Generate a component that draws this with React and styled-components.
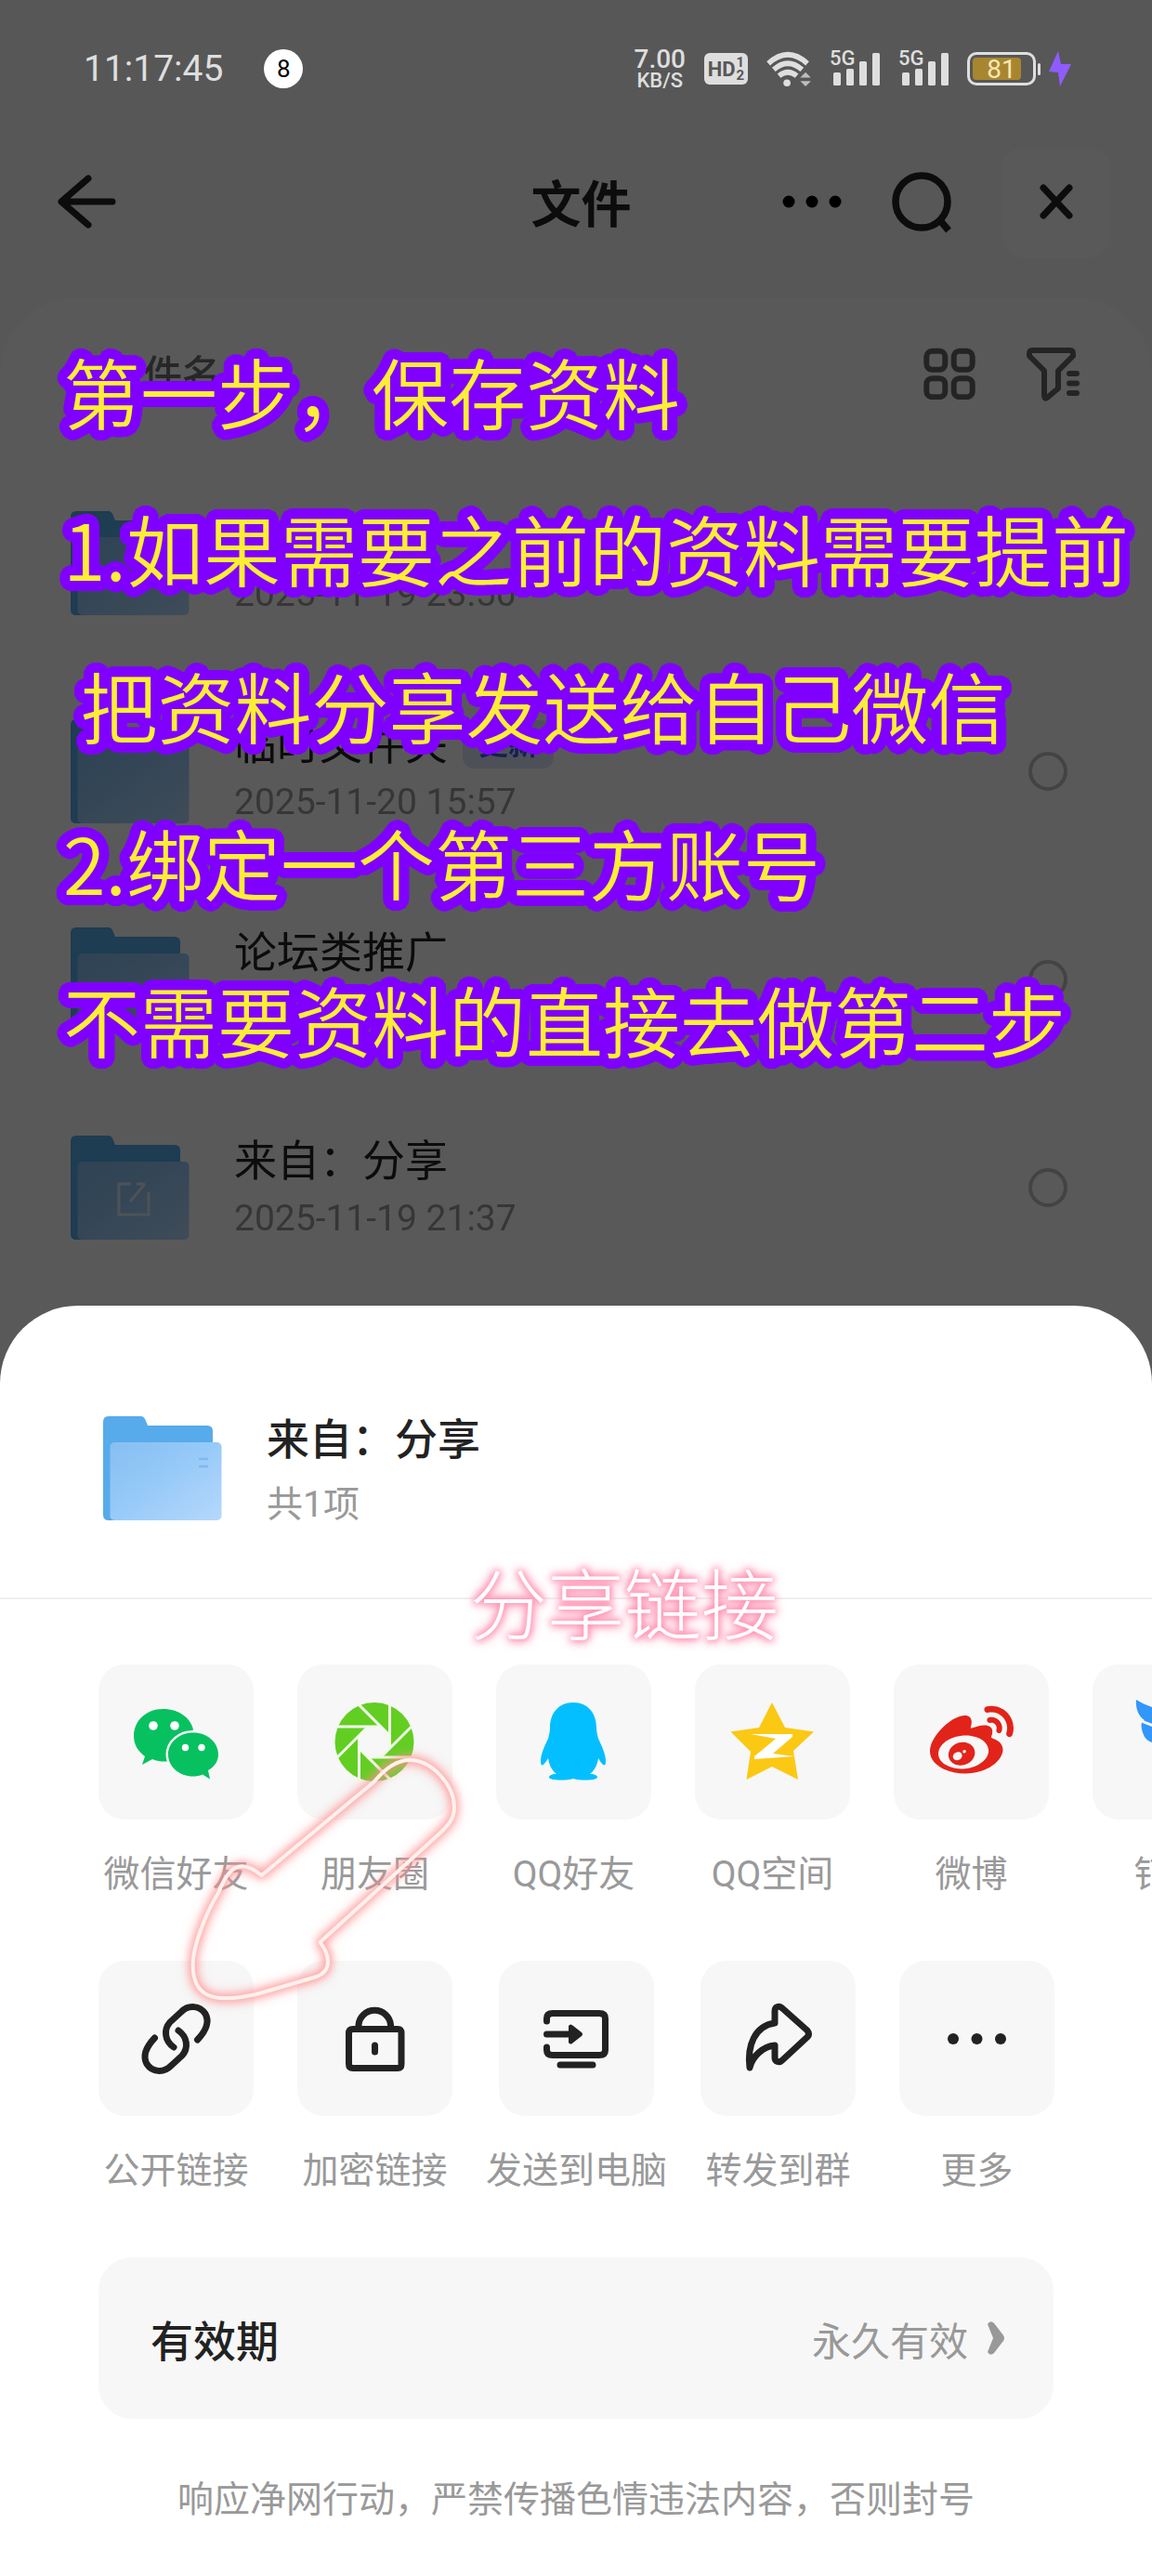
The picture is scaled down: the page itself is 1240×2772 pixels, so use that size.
import React from "react";
import styled, { createGlobalStyle, css } from "styled-components";
import { FaWeibo } from "react-icons/fa";

const files = [
  { id: 1, name: "", date: "2025-11-19 23:50" },
  { id: 2, name: "临时文件夹", date: "2025-11-20 15:57", tag: "更新" },
  { id: 3, name: "论坛类推广", date: "2025-11-18 20:16" },
  { id: 4, name: "来自：分享", date: "2025-11-19 21:37", shared: true },
];

const notes = [
  "第一步，保存资料",
  "1.如果需要之前的资料需要提前",
  " 把资料分享发送给自己微信",
  "2.绑定一个第三方账号",
  "不需要资料的直接去做第二步",
];

const apps = [
  { label: "微信好友", icon: <WechatIcon /> },
  { label: "朋友圈", icon: <MomentsIcon /> },
  { label: "QQ好友", icon: <QQIcon /> },
  { label: "QQ空间", icon: <QzoneIcon /> },
  { label: "微博", icon: <FaWeibo size={90} color="#e2231a" /> },
  { label: "钉钉", icon: <DingtalkIcon /> },
];

const actions = [
  { label: "公开链接", icon: <LinkIcon /> },
  { label: "加密链接", icon: <LockIcon /> },
  { label: "发送到电脑", icon: <ComputerIcon /> },
  { label: "转发到群", icon: <ForwardIcon /> },
  { label: "更多", icon: <MoreIcon /> },
];

// solid ring of shadows, reads as a thick round outline
const outline = (radius, color) =>
  Array.from({ length: 32 }, (_, i) => {
    const a = (i / 32) * Math.PI * 2;
    const x = (Math.cos(a) * radius).toFixed(1);
    const y = (Math.sin(a) * radius).toFixed(1);
    return `${x}px ${y}px 0 ${color}`;
  }).join(", ");

function App() {
  return (
    <Page>
      <GlobalStyle />
      <StatusBar />
      <Dimmed>
        <Header>
          <IconButton aria-label="返回">
            <svg width="72" height="72" viewBox="0 0 72 72">
              <Line d="M40 10 L11 35 L40 60 M11 35 H66" />
            </svg>
          </IconButton>
          <Title>文件</Title>
          <HeaderActions>
            <IconButton aria-label="更多">
              <svg width="64" height="64" viewBox="0 0 64 64">
                <circle cx="7" cy="31" r="6.5" />
                <circle cx="32" cy="31" r="6.5" />
                <circle cx="57" cy="31" r="6.5" />
              </svg>
            </IconButton>
            <IconButton aria-label="搜索">
              <svg width="72" height="72" viewBox="0 0 72 72">
                <circle cx="36" cy="35" r="28" fill="none" stroke="#222" strokeWidth="7.5" />
                <path d="M55 54 L65 66" stroke="#222" strokeWidth="7.5" />
              </svg>
            </IconButton>
            <CloseButton aria-label="关闭">
              <svg width="44" height="44" viewBox="0 0 44 44">
                <Line d="M8 6 L36 36 M36 6 L8 36" />
              </svg>
            </CloseButton>
          </HeaderActions>
        </Header>
        <Panel>
          <Toolbar>
            <SortLabel>文件名</SortLabel>
            <ToolbarActions>
              <IconButton aria-label="网格">
                <svg width="56" height="56" viewBox="0 0 56 56" fill="none" stroke="#676767" strokeWidth="6">
                  <rect x="3.3" y="3.8" width="20" height="20" rx="6" />
                  <rect x="32.7" y="3.8" width="20" height="20" rx="6" />
                  <rect x="3.3" y="33.2" width="20" height="20" rx="6" />
                  <rect x="32.7" y="33.2" width="20" height="20" rx="6" />
                </svg>
              </IconButton>
              <IconButton aria-label="筛选">
                <svg width="60" height="60" viewBox="0 0 60 60">
                  <Line
                    $color="#676767"
                    $width={6}
                    d="M7 5 H48 Q51 5 51 9 V11 L35 27 V46 L23 56 Q20 58 20 53 V27 L4 11 V9 Q4 5 7 5 Z"
                  />
                  <Line $color="#676767" $width={6} d="M47 30 H55 M47 40.5 H55 M47 51 H55" />
                </svg>
              </IconButton>
            </ToolbarActions>
          </Toolbar>
          <FileList>
            {files.map((file) => (
              <FileRow key={file.id}>
                <Folder shared={file.shared} id={`file-${file.id}`} />
                <FileText>
                  <FileName>
                    <span>{file.name}</span>
                    {file.tag && <Tag>{file.tag}</Tag>}
                  </FileName>
                  <FileDate>{file.date}</FileDate>
                </FileText>
                <Pick type="checkbox" aria-label={file.name || file.date} />
              </FileRow>
            ))}
          </FileList>
        </Panel>
      </Dimmed>

      <Notes>
        {notes.map((note) => (
          <p key={note}>{note}</p>
        ))}
      </Notes>

      <Sheet>
        <SheetHeader>
          <Folder lines id="sheet" />
          <SheetText>
            <SheetTitle>来自：分享</SheetTitle>
            <SheetCount>共1项</SheetCount>
          </SheetText>
        </SheetHeader>
        <ShareRow>
          {apps.map((item) => (
            <ShareItem key={item.label}>
              <Tile>{item.icon}</Tile>
              {item.label}
            </ShareItem>
          ))}
        </ShareRow>
        <ShareRow>
          {actions.map((item) => (
            <ShareItem key={item.label}>
              <Tile>{item.icon}</Tile>
              {item.label}
            </ShareItem>
          ))}
        </ShareRow>
        <Validity>
          有效期
          <ValidityValue>
            永久有效
            <svg width="20" height="36" viewBox="0 0 20 36">
              <path d="M1 3 Q4 -2 8 2 L18 15 Q20 18 18 21 L8 34 Q4 38 1 33 L7 18 Z" fill="#999" />
            </svg>
          </ValidityValue>
        </Validity>
        <Footer>响应净网行动，严禁传播色情违法内容，否则封号</Footer>
        <GlowText>分享链接</GlowText>
        <GlowArrow viewBox="0 0 320 300" aria-hidden="true">
          <path d="M91.6 147 L213 46 Q232 23 251 23 C275 23 299 50 299 74 C299 86 292 94 282 103 L154.5 219 Q163 230 163 240 Q163 251 151 256 L86 275 C36 286 17.6 276 17.6 243 C17.6 225 30 190 45 166 C56 138 68 128 91.6 147 Z" />
        </GlowArrow>
      </Sheet>
    </Page>
  );
}

export default App;

function StatusBar() {
  return (
    <StatusRow>
      <Clock>11:17:45</Clock>
      <Badge>8</Badge>
      <StatusIcons>
        <Speed>
          <b>7.00</b>
          <span>KB/S</span>
        </Speed>
        <HdBadge>
          HD
          <HdNumbers>
            <i>1</i>
            <i>2</i>
          </HdNumbers>
        </HdBadge>
        <svg width="48" height="40" viewBox="1 0 50 42">
          <g fill="none" stroke="#dedede" strokeWidth="6">
            <path d="M3 15 Q25 -5 47 15" />
            <path d="M9 22 Q25 8 41 22" />
            <path d="M15 29 Q25 21 35 29" />
          </g>
          <circle cx="24" cy="37" r="4" fill="#dedede" />
          <path d="M39 31 L45 25 L51 31 Z M39 35 L45 41 L51 35 Z" fill="#bdbdbd" />
        </svg>
        <Signal />
        <Signal />
        <Power>
          <Battery>
            <Charge style={{ width: "76%" }} />
            <span>81</span>
          </Battery>
          <BatteryTip />
          <svg width="26" height="40" viewBox="0 0 26 40">
            <path d="M11 1 L1 23 L11 24 L13 39 L25 15 L14 15 Z" fill="#8f5cff" />
          </svg>
        </Power>
      </StatusIcons>
    </StatusRow>
  );
}

function Signal() {
  return (
    <SignalBox>
      <span>5G</span>
      <svg width="50" height="36" viewBox="0 0 50 36" fill="#dedede">
        <rect x="0" y="22" width="8" height="14" rx="1.5" />
        <rect x="14" y="18" width="8" height="18" rx="1.5" />
        <rect x="28" y="10" width="8" height="26" rx="1.5" />
        <rect x="42" y="1" width="8" height="35" rx="1.5" />
      </svg>
    </SignalBox>
  );
}

function Folder({ id, shared, lines }) {
  return (
    <svg width="128" height="114" viewBox="0 0 128 114">
      <defs>
        <linearGradient id={id} x1="0" y1="0" x2="1" y2="1">
          <stop offset="0" stopColor="#86bff2" />
          <stop offset="0.4" stopColor="#93c8f7" />
          <stop offset="1" stopColor="#b5d8fc" />
        </linearGradient>
      </defs>
      <path
        d="M0 7 Q0 1 6 1 H41 Q44 1 46 6 L48 11 H112 Q118 11 118 17 V113 H6 Q0 113 0 107 Z"
        fill="#57abea"
      />
      <rect x="7.5" y="29" width="120" height="84" rx="5" fill={`url(#${id})`} />
      {lines && <path d="M103 47 H113 M103 55 H113" stroke="#7fb9ee" strokeWidth="2.5" />}
      {shared && (
        <path
          d="M65 53 H52 V86 H84 V62 M64 72 L80 53 M71 53 H80"
          fill="none"
          stroke="#dfeaf6"
          strokeWidth="3"
        />
      )}
    </svg>
  );
}

/* icons below share the 167px tile as their canvas */

function WechatIcon() {
  return (
    <TileSvg>
      <path
        d="M69.5 48 C51 48 38 61 38 77 C38 86 42 93 50 99 L47 108 L58 102 C64 105 74 105 80 104 L102 70 C99 57 86 48 69.5 48 Z"
        fill="#07c160"
      />
      <circle cx="59" cy="66" r="4.8" fill="#fff" />
      <circle cx="82" cy="66" r="4.8" fill="#fff" />
      <path
        d="M102 73.5 C87 73.5 75 84 75 97 C75 110 87 120.5 102 120.5 C105 120.5 109 120 112 118.5 L120 123.5 L118 114 C125 110 129 104 129 97 C129 84 117 73.5 102 73.5 Z"
        fill="#07c160"
        stroke="#f7f7f7"
        strokeWidth="5"
        paintOrder="stroke"
      />
      <circle cx="93.5" cy="89.5" r="3.7" fill="#fff" />
      <circle cx="111" cy="89.5" r="3.7" fill="#fff" />
    </TileSvg>
  );
}

function MomentsIcon() {
  return (
    <TileSvg>
      <g transform="translate(83 83.5)">
        <circle r="42.5" fill="#62ce22" />
        <polygon
          points="16.5,6.8 16.5,-6.8 6.8,-16.5 -6.8,-16.5 -16.5,-6.8 -16.5,6.8 -6.8,16.5 6.8,16.5"
          fill="#f7f7f7"
        />
        {[0, 45, 90, 135, 180, 225, 270, 315].map((deg) => (
          <path
            key={deg}
            d="M16.5 6.8 V-42"
            stroke="#f1fbe9"
            strokeWidth="3"
            transform={`rotate(${deg})`}
          />
        ))}
      </g>
    </TileSvg>
  );
}

function QQIcon() {
  return (
    <TileSvg>
      <path
        d="M83 41 C67 41 58 53 58 68 C58 72 57 76 56 80 C52 88 48 97 48 104 C48 112 52 108 56 101 C57 108 60 114 65 118 C59 118 57 120 57 121.5 C57 125 74 125.5 83 123 C92 125.5 109 125 109 121.5 C109 120 107 118 101 118 C106 114 109 108 110 101 C114 108 118 112 118 104 C118 97 114 88 110 80 C109 76 108 72 108 68 C108 53 99 41 83 41 Z"
        fill="#04bfff"
      />
    </TileSvg>
  );
}

function QzoneIcon() {
  return (
    <TileSvg>
      <polygon
        points="83,41 97,68 128,72.5 106,93 111,124 83,110 55.5,124 60,94 38.5,72.5 69,68"
        fill="#fbc814"
      />
      <polygon points="60,75 105,75 105,78 84,96 107,99 64,102 64,99 87,80" fill="#fff" />
    </TileSvg>
  );
}

function DingtalkIcon() {
  return (
    <TileSvg fill="#3296fa">
      <path d="M47 38 C46 46 49 56 56 60 C50 62 53 72 56 78 C60 84 68 86 76 86 L72 96 H84 L70 124 L114 82 H100 C112 70 116 64 112 60 C96 54 66 50 47 38 Z" />
      <path d="M51 60 Q62 66 80 69" stroke="#f7f7f7" strokeWidth="3" fill="none" />
    </TileSvg>
  );
}

function LinkIcon() {
  return (
    <TileSvg>
      <Line d="M81 93 C71 86 70 74 77 66 L89 55 C97 47 109 48 115 57 C120 66 116 75 106.5 85" />
      <Line d="M86 75 C96 82 97 94 90 102 L78 113 C70 121 58 120 52 111 C47 102 51 93 60.5 83" />
    </TileSvg>
  );
}

function LockIcon() {
  return (
    <TileSvg>
      <Line d="M60 73.5 H108 Q112 73.5 112 78 V111 Q112 115.5 108 115.5 H60 Q55.5 115.5 55.5 111 V78 Q55.5 73.5 60 73.5 Z" />
      <Line d="M66 72 V69 A17.3 17 0 0 1 100.5 69 V72 M83.5 91 V98" />
    </TileSvg>
  );
}

function ComputerIcon() {
  return (
    <TileSvg>
      <Line d="M51.5 65 V62 Q51.5 56.5 58 56.5 H108 Q114.5 56.5 114.5 62 V96 Q114.5 101.5 108 101.5 H58 Q51.5 101.5 51.5 96 V93" />
      <Line d="M51.5 79 H76 M66 112 H101" />
      <path d="M75 70 Q77 67 80 70 L89 77 Q91 79 89 81 L80 88 Q77 91 75 88 Z" fill="#222" />
    </TileSvg>
  );
}

function ForwardIcon() {
  return (
    <TileSvg>
      <Line d="M53 115 C50 92 58 70 80 67 V54 C80 49 85 48 88 51 L115 75 Q118 79 115 82 L88 107 C85 110 80 109 80 104 V91 C68 92 56 102 53 115 Z" />
    </TileSvg>
  );
}

function MoreIcon() {
  return (
    <TileSvg fill="#222">
      <circle cx="58" cy="84" r="6" />
      <circle cx="83.5" cy="84" r="6" />
      <circle cx="109" cy="84" r="6" />
    </TileSvg>
  );
}

function TileSvg({ children, fill }) {
  return (
    <svg width="167" height="167" viewBox="0 0 167 167" fill={fill}>
      {children}
    </svg>
  );
}

const GlobalStyle = createGlobalStyle`
  * {
    box-sizing: border-box;
  }
  body {
    margin: 0;
    background: #fff;
    font-family: Roboto, "Noto Sans CJK SC", sans-serif;
    color: #222;
  }
  p, h1, h2, ul {
    margin: 0;
    padding: 0;
  }
  button {
    border: 0;
    padding: 0;
    background: none;
    color: inherit;
    font: inherit;
  }
  svg {
    display: block;
    flex-shrink: 0;
  }
`;

const row = css`
  display: flex;
  align-items: center;
`;

const Page = styled.div`
  position: relative;
  overflow: hidden;
  background: #595959;
`;

const StatusRow = styled.div`
  ${row}
  height: 148px;
  padding: 0 86px 0 90px;
  background: #575757;
  color: #dedede;
`;
const Clock = styled.time`
  font-size: 39px;
`;
const Badge = styled.span`
  ${row}
  justify-content: center;
  width: 42px;
  height: 42px;
  margin-left: 44px;
  border-radius: 50%;
  background: #fff;
  color: #000;
  font-size: 26px;
`;
const StatusIcons = styled.div`
  ${row}
  gap: 20px;
  margin-left: auto;
`;
const Speed = styled.div`
  display: flex;
  flex-direction: column;
  align-items: center;
  font-size: 22px;
  line-height: 22px;
  font-weight: 500;
  b {
    font-size: 28px;
    line-height: 25px;
    font-weight: 500;
  }
`;
const HdBadge = styled.div`
  ${row}
  justify-content: center;
  gap: 1px;
  width: 47px;
  height: 34px;
  border-radius: 6px;
  background: #dedede;
  color: #575757;
  font-size: 22px;
  font-weight: 700;
`;
const HdNumbers = styled.span`
  display: flex;
  flex-direction: column;
  font-size: 15px;
  line-height: 14px;
  i {
    font-style: normal;
  }
`;
const SignalBox = styled.div`
  display: flex;
  position: relative;
  padding-left: 4px;
  span {
    position: absolute;
    left: 0;
    top: -4px;
    font-size: 22px;
    line-height: 22px;
    font-weight: 500;
  }
`;
const Power = styled.div`
  ${row}
  gap: 2px;
  svg {
    margin-left: 6px;
  }
`;
const Battery = styled.div`
  ${row}
  justify-content: center;
  position: relative;
  width: 74px;
  height: 36px;
  padding: 3px;
  border: 3px solid #dedede;
  border-radius: 10px;
  font-size: 28px;
  color: #f6e6b8;
  span {
    position: relative;
  }
`;
const Charge = styled.div`
  position: absolute;
  left: 3px;
  top: 3px;
  bottom: 3px;
  border-radius: 4px;
  background: #a8862f;
`;
const BatteryTip = styled.div`
  width: 3px;
  height: 13px;
  border-radius: 2px;
  background: #dedede;
`;

const Dimmed = styled.div`
  background: #f8f8f8;
  filter: brightness(0.35);
`;
const Header = styled.header`
  display: grid;
  grid-template-columns: 1fr auto 1fr;
  align-items: center;
  height: 140px;
  padding: 0 44px 0 55px;
`;
const IconButton = styled.button`
  ${row}
  justify-self: start;
`;
const Title = styled.h1`
  padding-top: 8px;
  font-size: 54px;
  line-height: 60px;
  font-weight: 700;
`;
const HeaderActions = styled.div`
  ${row}
  justify-self: end;
  gap: 50px;
`;
const CloseButton = styled(IconButton)`
  justify-content: center;
  width: 118px;
  height: 118px;
  border-radius: 24px;
  background: #fff;
`;
const Panel = styled.main`
  margin-top: 32px;
  padding: 52px 76px 0;
  border-radius: 84px 84px 0 0;
  background: #fff;
`;
const Toolbar = styled.div`
  ${row}
  justify-content: space-between;
  height: 60px;
`;
const SortLabel = styled.span`
  padding: 4px 0 0 36px;
  font-size: 42px;
  line-height: 60px;
  font-weight: 500;
  color: #707070;
`;
const ToolbarActions = styled.div`
  ${row}
  gap: 54px;
`;
const FileList = styled.ul`
  padding-top: 62px;
  list-style: none;
`;
const FileRow = styled.li`
  ${row}
  height: 224px;
  padding-right: 15px;
`;
const FileText = styled.div`
  flex: 1;
  padding: 4px 0 0 48px;
`;
const FileName = styled.div`
  ${row}
  gap: 16px;
  height: 62px;
  font-size: 46px;
  line-height: 62px;
`;
const Tag = styled.span`
  padding: 0 17px;
  border-radius: 12px;
  background: #e0e5fc;
  color: #3a5cf0;
  font-size: 32px;
  line-height: 52px;
  font-weight: 700;
`;
const FileDate = styled.div`
  font-size: 39px;
  line-height: 62px;
  color: #9a9a9a;
`;
const Pick = styled.input`
  appearance: none;
  width: 42px;
  height: 42px;
  margin: 0;
  border: 4px solid #c0c0c0;
  border-radius: 50%;
`;

const Notes = styled.div`
  position: absolute;
  left: 68px;
  top: 336px;
  font-family: "Noto Sans CJK SC", sans-serif;
  font-size: 83px;
  line-height: 169px;
  font-weight: 350;
  white-space: pre;
  color: #fdee35;
  text-shadow: ${outline(11, "#8000ff")}, ${outline(5, "#8000ff")};
`;

const Sheet = styled.section`
  position: relative;
  margin-top: 15px;
  padding: 90px 0 50px;
  border-radius: 84px 84px 0 0;
  background: #fff;
`;
const SheetHeader = styled.header`
  ${row}
  gap: 48px;
  height: 226px;
  padding: 0 111px 54px;
  border-bottom: 2px solid #f0f0f0;
`;
const SheetText = styled.div`
  padding-top: 8px;
`;
const SheetTitle = styled.h2`
  font-size: 46px;
  line-height: 70px;
  font-weight: 500;
`;
const SheetCount = styled.p`
  font-size: 39px;
  line-height: 70px;
  color: #999;
`;
const ShareRow = styled.div`
  display: flex;
  gap: 25px;
  overflow: hidden;
  margin-top: 70px;
  padding-left: 95px;
  & + & {
    margin-top: 62px;
  }
`;
const ShareItem = styled.button`
  display: flex;
  flex-direction: column;
  align-items: center;
  gap: 28px;
  flex-shrink: 0;
  min-width: 189px;
  font-size: 39px;
  line-height: 62px;
  white-space: nowrap;
  color: #999;
`;
const Tile = styled.span`
  ${row}
  justify-content: center;
  width: 167px;
  height: 167px;
  border-radius: 28px;
  background: #f7f7f7;
`;
const Line = styled.path`
  fill: none;
  stroke: ${({ $color }) => $color || "#222"};
  stroke-width: ${({ $width }) => $width || 7};
  stroke-linecap: round;
  stroke-linejoin: round;
`;
const Validity = styled.button`
  ${row}
  justify-content: space-between;
  width: calc(100% - 212px);
  height: 174px;
  margin: 62px 106px 0;
  padding: 0 52px 0 56px;
  border-radius: 36px;
  background: #f7f7f7;
  font-size: 46px;
  font-weight: 500;
`;
const ValidityValue = styled.span`
  ${row}
  gap: 20px;
  font-size: 42px;
  font-weight: 400;
  color: #999;
`;
const Footer = styled.footer`
  margin-top: 56px;
  text-align: center;
  font-size: 39px;
  line-height: 62px;
  color: #999;
`;
const GlowText = styled.p`
  position: absolute;
  left: 506px;
  top: 257px;
  font-family: "Noto Sans CJK SC", sans-serif;
  font-size: 83px;
  line-height: 120px;
  font-weight: 300;
  color: #fff;
  text-shadow: 0 0 6px #ff8fb0, 0 0 8px #ff8fb0, 0 0 12px #ff9fbc, 0 0 14px #ff9fbc;
`;
const GlowArrow = styled.svg`
  position: absolute;
  left: 190px;
  top: 466px;
  width: 320px;
  height: 300px;
  overflow: visible;
  filter: drop-shadow(0 0 4px #ff8080) drop-shadow(0 0 6px #ffa0a0);
  path {
    fill: none;
    stroke: #fff1ee;
    stroke-width: 4;
    stroke-linejoin: round;
  }
`;
